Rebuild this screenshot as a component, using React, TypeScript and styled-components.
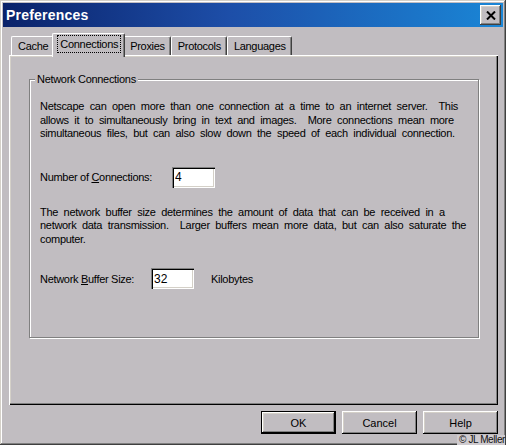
import React from "react";
import styled, { createGlobalStyle } from "styled-components";

const GlobalStyle = createGlobalStyle`
  html, body { margin: 0; padding: 0; background: #c1bdc1; }
  body { font-family: "Liberation Sans", Arial, sans-serif; font-size: 11px; color: #000; letter-spacing: -0.3px; }
`;

const Win = styled.div`
  position: relative;
  box-sizing: border-box;
  width: 506px;
  height: 445px;
  padding: 3px;
  background: #c1bdc1;
  display: flex;
  flex-direction: column;
  overflow: hidden;
  box-shadow: inset -1px -1px 0 #404040, inset 1px 1px 0 #d4d0c8,
    inset -2px -2px 0 #808080, inset 2px 2px 0 #ffffff;
`;

const TitleBar = styled.div`
  height: 24px;
  flex: none;
  display: flex;
  align-items: center;
  justify-content: space-between;
  padding: 0 2px 0 3px;
  background: linear-gradient(to right, #0a226a 0%, #1d4ea8 45%, #1a86d6 100%);
`;

const Title = styled.span`
  color: #fff;
  font-family: "Liberation Sans", Arial, sans-serif;
  font-weight: bold;
  font-size: 14px;
  letter-spacing: 0.2px;
`;

const CloseBtn = styled.button`
  width: 21px;
  height: 20px;
  padding: 0;
  border: none;
  background: #c1bdc1;
  display: flex;
  align-items: center;
  justify-content: center;
  box-shadow: inset -1px -1px 0 #404040, inset 1px 1px 0 #ffffff,
    inset -2px -2px 0 #808080, inset 2px 2px 0 #d4d0c8;
`;

const Body = styled.div`
  flex: 1;
  display: flex;
  flex-direction: column;
  padding: 6px 5px 8px 6px;
  min-height: 0;
`;

const TabStrip = styled.div`
  display: flex;
  align-items: flex-end;
  height: 22px;
  padding-left: 2px;
  flex: none;
`;

const Tab = styled.div<{ $active?: boolean }>`
  position: relative;
  z-index: ${(p) => (p.$active ? 1 : 0)};
  box-sizing: border-box;
  height: ${(p) => (p.$active ? 24 : 19)}px;
  margin: 0 ${(p) => (p.$active ? -2 : 0)}px ${(p) => (p.$active ? -2 : 0)}px;
  padding: ${(p) => (p.$active ? "2px 4px 0 5px" : "2px 5px 0 6px")};
  display: flex;
  align-items: flex-start;
  background: #c1bdc1;
  border-top: 1px solid #ffffff;
  border-left: 1px solid #ffffff;
  border-right: 1px solid #404040;
  border-radius: 2px 2px 0 0;
  box-shadow: inset -1px 0 0 #808080;
  line-height: 15px;
  white-space: nowrap;
`;

const FocusText = styled.span`
  outline: 1px dotted #000;
  padding: 0 2px;
  line-height: 16px;
`;

const Panel = styled.div`
  flex: 1;
  display: flex;
  flex-direction: column;
  padding: 18px 19px 0 20px;
  box-shadow: inset 1px 1px 0 #ffffff, inset -1px -1px 0 #000000,
    inset -2px -2px 0 #808080, inset 2px 2px 0 #d4d0c8;
`;

const Group = styled.fieldset`
  margin: 0;
  padding: 14px 10px 48px 10px;
  border: 1px solid #808080;
  box-shadow: 1px 1px 0 #ffffff, inset 1px 1px 0 #ffffff;
  min-width: 0;
`;

const Legend = styled.legend`
  padding: 0 2px;
  margin-left: -5px;
  line-height: 13px;
  background: #c1bdc1;
`;

const Para = styled.p<{ $gap: number }>`
  margin: ${(p) => p.$gap}px 0 0 0;
  line-height: 13.5px;
  white-space: pre;
  word-spacing: 2.8px;
`;

const Row = styled.div<{ $gap: number }>`
  display: flex;
  align-items: center;
  margin-top: ${(p) => p.$gap}px;
  height: 21px;
`;

const Label = styled.span<{ $width: number }>`
  width: ${(p) => p.$width}px;
  flex: none;
`;

const Field = styled.input`
  box-sizing: border-box;
  width: 43px;
  height: 21px;
  border: none;
  outline: none;
  padding: 0 0 0 3px;
  background: #fff;
  font: inherit;
  font-size: 12px;
  box-shadow: inset 1px 1px 0 #808080, inset 2px 2px 0 #000000,
    inset -1px -1px 0 #ffffff, inset -2px -2px 0 #d4d0c8;
`;

const Unit = styled.span`
  margin-left: 17px;
`;

const Buttons = styled.div`
  display: flex;
  justify-content: flex-end;
  gap: 6px;
  margin-top: 6px;
  flex: none;
`;

const Btn = styled.button<{ $default?: boolean }>`
  box-sizing: border-box;
  width: 75px;
  height: 23px;
  padding: 0;
  font: inherit;
  color: #000;
  background: #c1bdc1;
  border: ${(p) => (p.$default ? "1px solid #000" : "none")};
  box-shadow: inset -1px -1px 0 #000, inset 1px 1px 0 #fff,
    inset -2px -2px 0 #808080, inset 2px 2px 0 #d4d0c8;
`;

const Credit = styled.span`
  position: absolute;
  right: 1px;
  bottom: 0;
  font-size: 10px;
  line-height: 10px;
  letter-spacing: -0.4px;
  color: #111;
  background: #cfcbcf;
  padding: 0 0 0 2px;
  white-space: nowrap;
`;

const U = styled.span`
  text-decoration: underline;
`;

export default function App() {
  return (
    <>
      <GlobalStyle />
      <Win>
        <TitleBar>
          <Title>Preferences</Title>
          <CloseBtn aria-label="Close">
            <svg width="10" height="9" viewBox="0 0 10 9">
              <path d="M1 0.5 L9 8.5 M9 0.5 L1 8.5" stroke="#000" strokeWidth="2" />
            </svg>
          </CloseBtn>
        </TitleBar>
        <Body>
          <TabStrip>
            <Tab>Cache</Tab>
            <Tab $active>
              <FocusText>Connections</FocusText>
            </Tab>
            <Tab>Proxies</Tab>
            <Tab>Protocols</Tab>
            <Tab>Languages</Tab>
          </TabStrip>
          <Panel>
            <Group>
              <Legend>Network Connections</Legend>
              <Para $gap={0}>
                {"Netscape can open more than one connection at a time to an internet server.  This\nallows it to simultaneously bring in text and images.  More connections mean more\nsimultaneous files, but can also slow down the speed of each individual connection."}
              </Para>
              <Row $gap={26}>
                <Label $width={132}>
                  Number of <U>C</U>onnections:
                </Label>
                <Field defaultValue="4" />
              </Row>
              <Para $gap={18}>
                {"The network buffer size determines the amount of data that can be received in a\nnetwork data transmission.  Larger buffers mean more data, but can also saturate the\ncomputer."}
              </Para>
              <Row $gap={22}>
                <Label $width={111}>
                  Network <U>B</U>uffer Size:
                </Label>
                <Field defaultValue="32" />
                <Unit>Kilobytes</Unit>
              </Row>
            </Group>
          </Panel>
          <Buttons>
            <Btn $default>OK</Btn>
            <Btn>Cancel</Btn>
            <Btn>Help</Btn>
          </Buttons>
        </Body>
        <Credit>© JL Meller</Credit>
      </Win>
    </>
  );
}
